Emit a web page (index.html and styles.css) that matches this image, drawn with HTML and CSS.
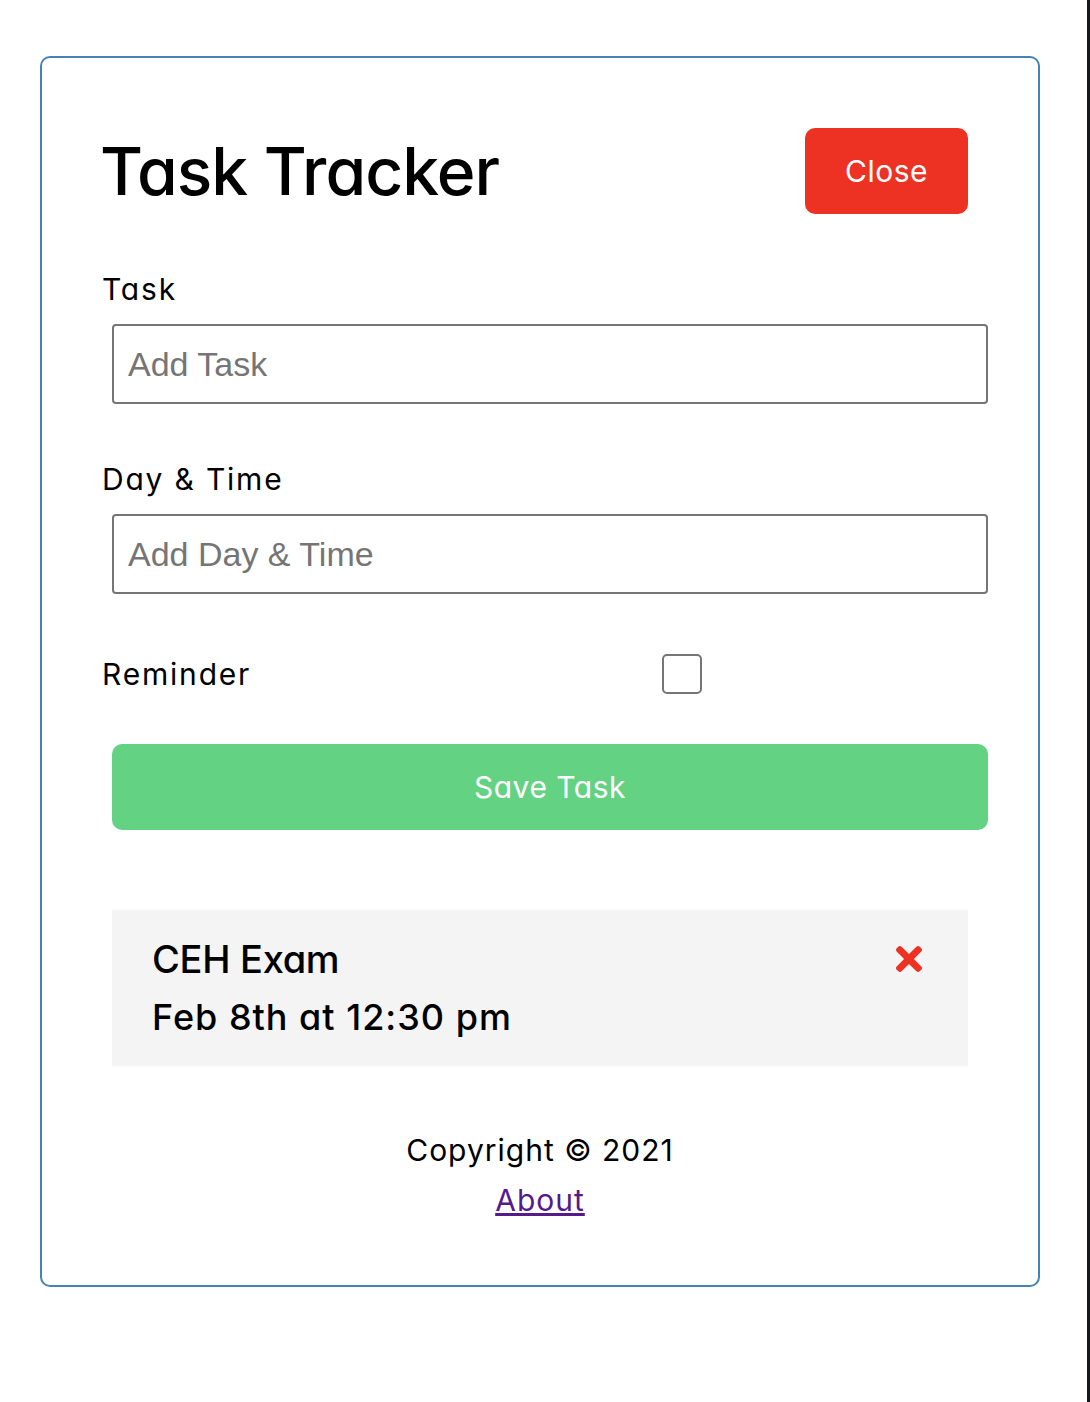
FILE: index.html
```html
<!DOCTYPE html>
<html lang="en">
<head>
<meta charset="utf-8">
<title>Task Tracker</title>
<link rel="stylesheet" href="styles.css">
</head>
<body>
<div class="page">
  <div class="viewport">
    <div class="container">
      <header class="header">
        <h1>Task Tracker</h1>
        <button class="btn btn-close">Close</button>
      </header>
      <form class="add-form">
        <div class="form-control">
          <label>Task</label>
          <input type="text" placeholder="Add Task">
        </div>
        <div class="form-control">
          <label>Day &amp; Time</label>
          <input type="text" placeholder="Add Day &amp; Time">
        </div>
        <div class="form-control-check">
          <label>Reminder</label>
          <div class="check-wrap"><input type="checkbox" class="check"></div>
        </div>
        <input type="button" value="Save Task" class="btn btn-block">
      </form>
      <div class="task">
        <h3>CEH Exam
          <svg class="times" viewBox="0 80 352 352" width="26" height="26" aria-hidden="true"><path fill="currentColor" d="M242.72 256l100.07-100.07c12.28-12.28 12.28-32.19 0-44.48l-22.24-22.24c-12.28-12.28-32.19-12.28-44.48 0L176 189.28 75.93 89.21c-12.28-12.28-32.19-12.28-44.48 0L9.21 111.45c-12.28 12.28-12.28 32.19 0 44.48L109.28 256 9.21 356.07c-12.28 12.28-12.28 32.19 0 44.48l22.24 22.24c12.28 12.28 32.2 12.28 44.48 0L176 322.72l100.07 100.07c12.28 12.28 32.2 12.28 44.48 0l22.24-22.24c12.28-12.28 12.28-32.19 0-44.480L242.72 256z"/></svg>
        </h3>
        <p>Feb 8th at 12:30 pm</p>
      </div>
      <footer class="footer">
        <p>Copyright &copy; 2021</p>
        <a href="#about" class="about">About</a>
      </footer>
    </div>
  </div>
  <div class="edge"></div>
</div>
</body>
</html>
```

FILE: styles.css
```css
* { box-sizing: border-box; }

html, body { margin: 0; padding: 0; background: #fff; }

body {
  font-family: Inter, "Noto Sans", sans-serif;
  font-feature-settings: "cv11" 1;
  color: #000;
}

.page { display: flex; min-height: 1402px; }
.viewport { flex: 1; }
.edge { width: 3px; background: #15191d; }

.container {
  width: 1000px;
  margin: 56px 0 0 40px;
  padding: 60px;
  border: 2px solid steelblue;
  border-radius: 10px;
}

.header {
  display: flex;
  justify-content: space-between;
  align-items: center;
  margin-bottom: 40px;
}

.header h1 {
  margin: 0 0 0 -2px;
  font-size: 66px;
  font-weight: 500;
  line-height: 80px;
  letter-spacing: -1px;
}

.btn {
  font-family: inherit;
  font-feature-settings: "cv11" 1;
  font-size: 30px;
  letter-spacing: 0.5px;
  line-height: 46px;
  padding: 20px 40px;
  margin: 10px;
  border: none;
  border-radius: 10px;
  color: #fff;
  cursor: pointer;
}

.btn-close { background: #ed3224; }

.btn-block {
  display: block;
  width: 100%;
  background: #63d283;
}

.add-form { margin: 0 0 80px; }

.form-control {
  display: flex;
  flex-direction: column;
  margin: 0 0 40px;
}

.form-control label,
.form-control-check label {
  font-size: 30px;
  letter-spacing: 1.8px;
  line-height: 50px;
  height: 50px;
}

.form-control input {
  width: 100%;
  height: 80px;
  margin: 10px 0 10px 10px;
  padding: 6px 14px;
  border: 2px solid #767676;
  border-radius: 4px;
  font-family: "Liberation Sans", Arial, sans-serif;
  font-size: 34px;
  color: #000;
  background: #fff;
}

.form-control input::placeholder { color: #757575; }

.form-control-check {
  display: flex;
  align-items: center;
  margin: 0 0 40px;
}

.form-control-check label { flex: 1; }

.check-wrap {
  flex: 2;
  margin: 10px;
  display: flex;
  justify-content: center;
}

.check {
  appearance: none;
  -webkit-appearance: none;
  width: 40px;
  height: 40px;
  margin: 0 0 0 -2px;
  border: 2px solid #767676;
  border-radius: 5px;
  background: #fff;
}

.task {
  background: #f4f4f4;
  margin: 10px;
  padding: 20px 40px;
}

.task h3 {
  margin: 0;
  height: 58px;
  display: flex;
  align-items: center;
  justify-content: space-between;
  font-size: 38px;
  letter-spacing: -0.3px;
  font-weight: 500;
}

.times { color: #ed3224; margin-right: 6px; }

.task p {
  margin: 0;
  font-size: 36px;
  letter-spacing: 1px;
  line-height: 58px;
  font-weight: 500;
}

.footer {
  margin-top: 60px;
  text-align: center;
  font-size: 30px;
  letter-spacing: 1px;
  line-height: 49.5px;
}

.footer p { margin: 0; }

.about { color: #551a8b; }
```
